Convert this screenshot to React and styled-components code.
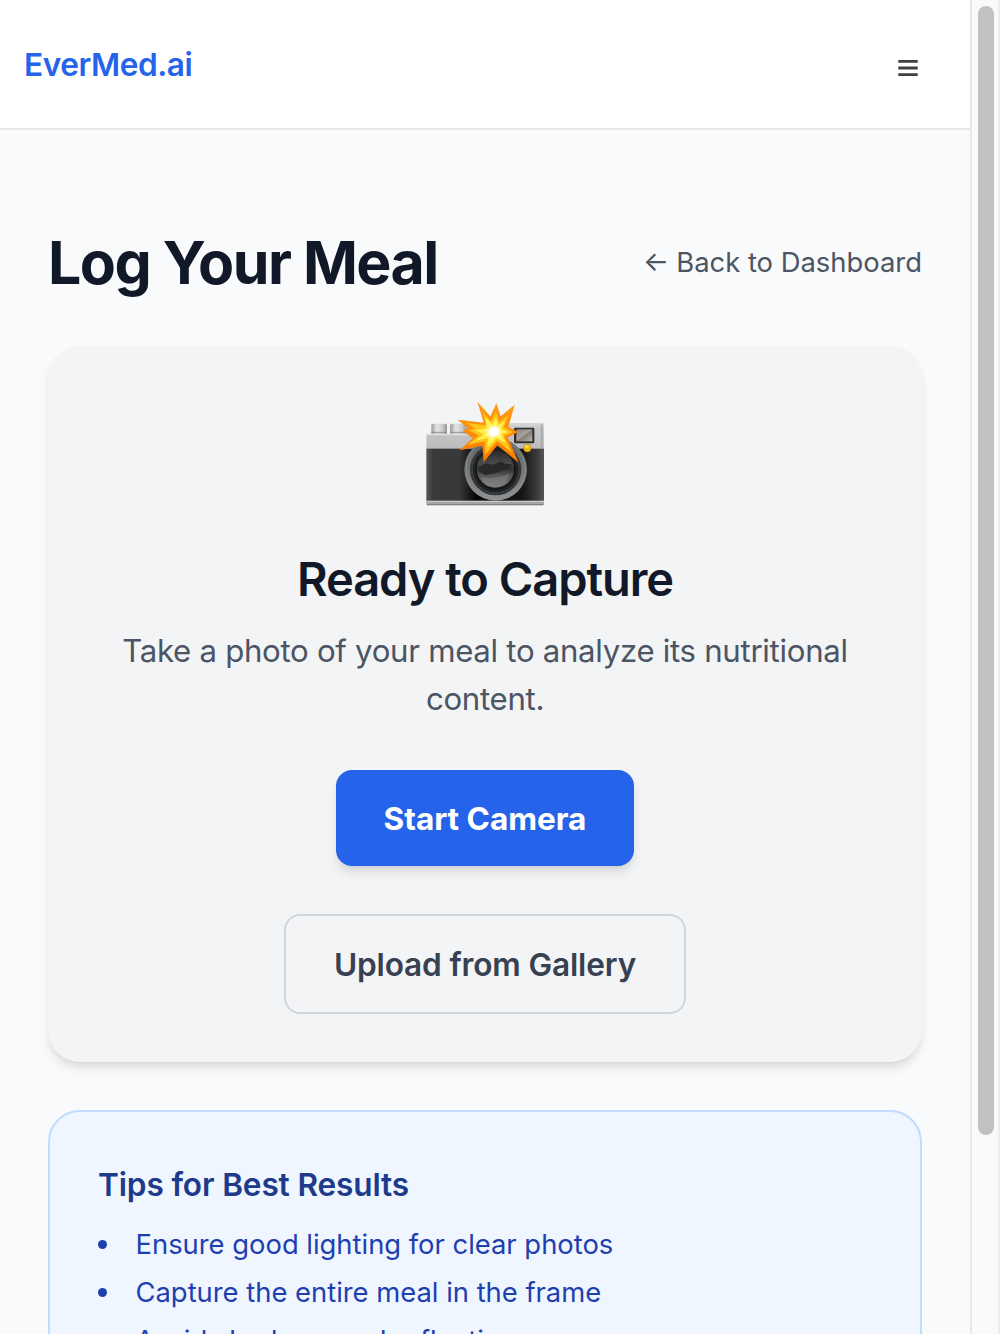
import React from "react";
import styled, { createGlobalStyle } from "styled-components";

const GlobalStyle = createGlobalStyle`
  *, *::before, *::after { box-sizing: border-box; }
  html, body { margin: 0; padding: 0; overflow: hidden; background: #fafafa; }
  body { font-family: Inter, "Liberation Sans", sans-serif; }
  h1, h2, h3, p, ul { margin: 0; padding: 0; }
  button { font-family: inherit; cursor: pointer; }
`;

const Viewport = styled.div`
  display: flex;
  width: 1000px;
  height: 1334px;
  overflow: hidden;
`;

const Page = styled.div`
  width: 970px;
  height: 100%;
  overflow: hidden;
  background: #fafafa;
`;

const ScrollTrack = styled.div`
  width: 30px;
  height: 100%;
  padding: 6px 4px 0 6px;
  border-left: 2px solid #e8e8e8;
  border-right: 2px solid #ededed;
  background: #fafafa;
`;

const ScrollThumb = styled.div`
  width: 16px;
  height: 1129px;
  border-radius: 8px;
  background: #c1c1c1;
`;

const Header = styled.header`
  display: flex;
  align-items: center;
  justify-content: space-between;
  height: 130px;
  padding: 0 52px 0 24px;
  border-bottom: 2px solid #e5e7eb;
  background: #fff;
`;

const Brand = styled.a`
  padding-top: 2px;
  color: #2563eb;
  font-size: 31.6px;
  font-weight: 620;
  line-height: 48px;
  letter-spacing: -0.45px;
  white-space: nowrap;
`;

const MenuButton = styled.button`
  display: flex;
  margin-top: 7px;
  padding: 0;
  border: 0;
  background: none;
  color: #404040;
`;

const Main = styled.main`
  display: flex;
  flex-direction: column;
  gap: 48px;
  padding: 96px 48px;
  background: #f9fafc;
  box-shadow: inset 0 24px 40px 4px #fafafa;
`;

const TitleRow = styled.div`
  display: flex;
  align-items: center;
  justify-content: space-between;
`;

const Title = styled.h1`
  height: 72px;
  padding-top: 1px;
  color: #111827;
  font-size: 59px;
  font-weight: 720;
  line-height: 72px;
  letter-spacing: -1.5px;
  white-space: nowrap;
`;

const BackLink = styled.a`
  display: flex;
  gap: 7px;
  color: #4b5563;
  font-size: 27.4px;
  line-height: 40px;
  letter-spacing: 0;
  white-space: nowrap;
`;

const Arrow = styled.span`
  margin-top: -1px;
`;

const CaptureCard = styled.section`
  display: flex;
  flex-direction: column;
  align-items: center;
  padding: 48px;
  border-radius: 32px;
  background: #f3f4f6;
  box-shadow: 0 8px 12px -2px rgba(0, 0, 0, 0.1), 0 4px 8px -4px rgba(0, 0, 0, 0.1);
`;

const CardTitle = styled.h2`
  height: 64px;
  margin-top: 32px;
  padding-top: 1px;
  color: #111827;
  font-size: 47px;
  font-weight: 630;
  line-height: 64px;
  letter-spacing: -1.05px;
  white-space: nowrap;
`;

const CardText = styled.p`
  margin: 17px 0 47px;
  color: #4b5563;
  font-size: 31.2px;
  line-height: 48px;
  letter-spacing: -0.3px;
  text-align: center;
`;

const Actions = styled.div`
  display: flex;
  flex-direction: column;
  align-items: center;
  gap: 48px;
`;

const Button = styled.button`
  display: flex;
  align-items: center;
  justify-content: center;
  width: ${(p) => (p.$primary ? 298 : 402)}px;
  height: ${(p) => (p.$primary ? 96 : 100)}px;
  padding: 2px 0 0;
  border: ${(p) => (p.$primary ? "0" : "2px solid #d1d5db")};
  border-radius: 16px;
  background: ${(p) => (p.$primary ? "#2563eb" : "transparent")};
  color: ${(p) => (p.$primary ? "#fff" : "#374151")};
  font-size: 31.6px;
  font-weight: ${(p) => (p.$primary ? 650 : 620)};
  line-height: 48px;
  letter-spacing: ${(p) => (p.$primary ? -0.05 : -0.15)}px;
  white-space: nowrap;
  box-shadow: ${(p) =>
    p.$primary ? "0 8px 12px -2px rgba(0, 0, 0, 0.1), 0 4px 8px -4px rgba(0, 0, 0, 0.1)" : "none"};
`;

const TipsCard = styled.section`
  padding: 49px 48px 48px;
  border: 2px solid #bfdbfe;
  border-radius: 32px;
  background: #eff6ff;
`;

const TipsTitle = styled.h3`
  margin-bottom: 15px;
  color: #1e3a8a;
  font-size: 31.6px;
  font-weight: 620;
  line-height: 48px;
  letter-spacing: -0.14px;
`;

const TipList = styled.ul`
  display: flex;
  flex-direction: column;
  gap: 8px;
  list-style: none;
`;

const Tip = styled.li`
  display: flex;
  align-items: center;
  gap: 28.5px;
  color: #1e40af;
  font-size: 27.4px;
  line-height: 40px;
  letter-spacing: -0.01px;
  white-space: nowrap;

  &::before {
    content: "";
    width: 9px;
    height: 9px;
    border-radius: 50%;
    background: currentColor;
  }
`;

const CameraFlash = () => (
  <svg width="120" height="120" viewBox="30 13 360 360" aria-hidden="true">
    <defs>
      <linearGradient id="silver" x1="0" y1="0" x2="0" y2="1">
        <stop offset="0" stopColor="#d7d8d9" />
        <stop offset="0.2" stopColor="#c6c7c8" />
        <stop offset="1" stopColor="#bbbcbd" />
      </linearGradient>
      <linearGradient id="knob" x1="0" y1="0" x2="1" y2="0">
        <stop offset="0" stopColor="#999b9d" />
        <stop offset="0.35" stopColor="#e5e6e7" />
        <stop offset="0.75" stopColor="#c6c7c9" />
        <stop offset="1" stopColor="#8e9092" />
      </linearGradient>
      <linearGradient id="leather" x1="0" y1="0" x2="1" y2="0">
        <stop offset="0" stopColor="#575757" />
        <stop offset="0.06" stopColor="#393939" />
        <stop offset="0.28" stopColor="#393939" />
        <stop offset="0.42" stopColor="#070707" />
        <stop offset="0.82" stopColor="#161616" />
        <stop offset="0.94" stopColor="#3b3b3b" />
        <stop offset="1" stopColor="#555" />
      </linearGradient>
      <linearGradient id="ring" x1="0" y1="0" x2="0" y2="1">
        <stop offset="0" stopColor="#606163" />
        <stop offset="0.6" stopColor="#77797a" />
        <stop offset="1" stopColor="#919394" />
      </linearGradient>
      <linearGradient id="glass" x1="0" y1="0" x2="0" y2="1">
        <stop offset="0" stopColor="#26282a" />
        <stop offset="0.35" stopColor="#4b4b4d" />
        <stop offset="0.5" stopColor="#303133" />
        <stop offset="0.68" stopColor="#58585a" />
        <stop offset="1" stopColor="#7a7b7d" />
      </linearGradient>
      <linearGradient id="finder" x1="0" y1="0" x2="1" y2="1">
        <stop offset="0" stopColor="#8d8580" />
        <stop offset="0.48" stopColor="#aaa29c" />
        <stop offset="0.52" stopColor="#827b77" />
        <stop offset="1" stopColor="#bcb4ac" />
      </linearGradient>
      <linearGradient id="burst" x1="0" y1="0" x2="0" y2="1">
        <stop offset="0" stopColor="#ff9d16" />
        <stop offset="1" stopColor="#fb7900" />
      </linearGradient>
      <radialGradient id="core">
        <stop offset="0" stopColor="#fff" />
        <stop offset="0.35" stopColor="#fffbd0" />
        <stop offset="1" stopColor="#fff04a" />
      </radialGradient>
    </defs>
    <rect x="49" y="102" width="47" height="33" rx="5" fill="url(#knob)" />
    <rect x="105" y="102" width="50" height="33" rx="5" fill="url(#knob)" />
    <path d="M49 128h47M105 128h50" stroke="#8f9193" strokeWidth="3" />
    <path d="M34 138q0-6 6-6H185V107q0-7 7-7H381q6 0 6 6V180H34Z" fill="url(#silver)" />
    <path d="M35 135H182" stroke="#e5e6e7" strokeWidth="3" />
    <path d="M380 103V176" stroke="#a6a7a8" strokeWidth="5" />
    <rect x="34" y="177" width="353" height="158" fill="url(#leather)" />
    <path d="M34 333H387V343q0 4-4 4H38q-4 0-4-4Z" fill="#a4a5a6" />
    <path d="M34 335H387" stroke="#d0d1d2" strokeWidth="3" />
    <path d="M36 345H385" stroke="#77797b" strokeWidth="3" />
    <circle cx="242" cy="239" r="94" fill="url(#ring)" />
    <circle cx="242" cy="239" r="89" fill="none" stroke="#8b8d8e" strokeWidth="3" />
    <circle cx="242" cy="240" r="77" fill="#343638" />
    <circle cx="242" cy="240" r="70" fill="#202224" stroke="#4a4d4f" strokeWidth="2" />
    <circle cx="242" cy="240" r="61" fill="#141618" />
    <circle cx="241" cy="238" r="56" fill="url(#glass)" />
    <path d="M193 232l20-11 22 4 22-10 13 7 21 2-10 14-16 3-15 7-20 4-18 5-13-8-8-6Z" fill="#29292b" />
    <path d="M197 262q35 9 86-10-10 39-43 40-32 0-43-30Z" fill="#8b8c8e" opacity=".4" />
    <rect x="297" y="114" width="61" height="47" rx="4" fill="#2f2d2c" />
    <rect x="304" y="119" width="48" height="36" fill="url(#finder)" />
    <circle cx="337" cy="176" r="12" fill="#8c650e" />
    <circle cx="337" cy="175" r="11" fill="#efb51b" />
    <ellipse cx="335" cy="171" rx="6" ry="4" fill="#ffda58" />
    <path d="M187 36L226 80L244 41L257 80L299 45L280 112L309 127L278 143L311 219L247 167L206 218L202 168L133 182L174 146L144 125L158 115L128 90L206 99Z" fill="url(#burst)" />
    <path d="M202 68L228 95L243 66L253 98L280 76L267 113L294 127L267 139L292 190L246 154L211 195L209 155L158 166L191 137L160 122L180 117L153 99L214 107Z" fill="#ffc51b" />
    <path d="M211 83L231 103L243 82L250 106L270 94L259 117L279 127L260 134L273 161L245 146L217 174L219 145L182 153L206 134L181 122L214 116Z" fill="#fff04a" />
    <path d="M219 97L233 112L242 98L247 112L260 105L254 120L267 127L254 132L262 149L243 138L222 158L226 138L204 140L218 128L203 119L222 119Z" fill="url(#core)" />
    <circle cx="238" cy="126" r="14" fill="#fff" />
  </svg>
);

const MenuIcon = () => (
  <svg width="20" height="18" viewBox="0 0 20 18" aria-hidden="true">
    <path d="M.3 2.4H19.7M.3 9H19.7M.3 15.6H19.7" stroke="currentColor" strokeWidth="2.8" />
  </svg>
);

const tips = [
  "Ensure good lighting for clear photos",
  "Capture the entire meal in the frame",
  "Avoid shadows and reflections",
];

export default function App() {
  return (
    <Viewport>
      <GlobalStyle />
      <Page>
        <Header>
          <Brand>EverMed.ai</Brand>
          <MenuButton aria-label="Menu">
            <MenuIcon />
          </MenuButton>
        </Header>
        <Main>
          <TitleRow>
            <Title>Log Your Meal</Title>
            <BackLink>
              <Arrow>←</Arrow>
              <span>Back to Dashboard</span>
            </BackLink>
          </TitleRow>
          <CaptureCard>
            <CameraFlash />
            <CardTitle>Ready to Capture</CardTitle>
            <CardText>Take a photo of your meal to analyze its nutritional content.</CardText>
            <Actions>
              <Button $primary>Start Camera</Button>
              <Button>Upload from Gallery</Button>
            </Actions>
          </CaptureCard>
          <TipsCard>
            <TipsTitle>Tips for Best Results</TipsTitle>
            <TipList>
              {tips.map((tip) => (
                <Tip key={tip}>{tip}</Tip>
              ))}
            </TipList>
          </TipsCard>
        </Main>
      </Page>
      <ScrollTrack>
        <ScrollThumb />
      </ScrollTrack>
    </Viewport>
  );
}
